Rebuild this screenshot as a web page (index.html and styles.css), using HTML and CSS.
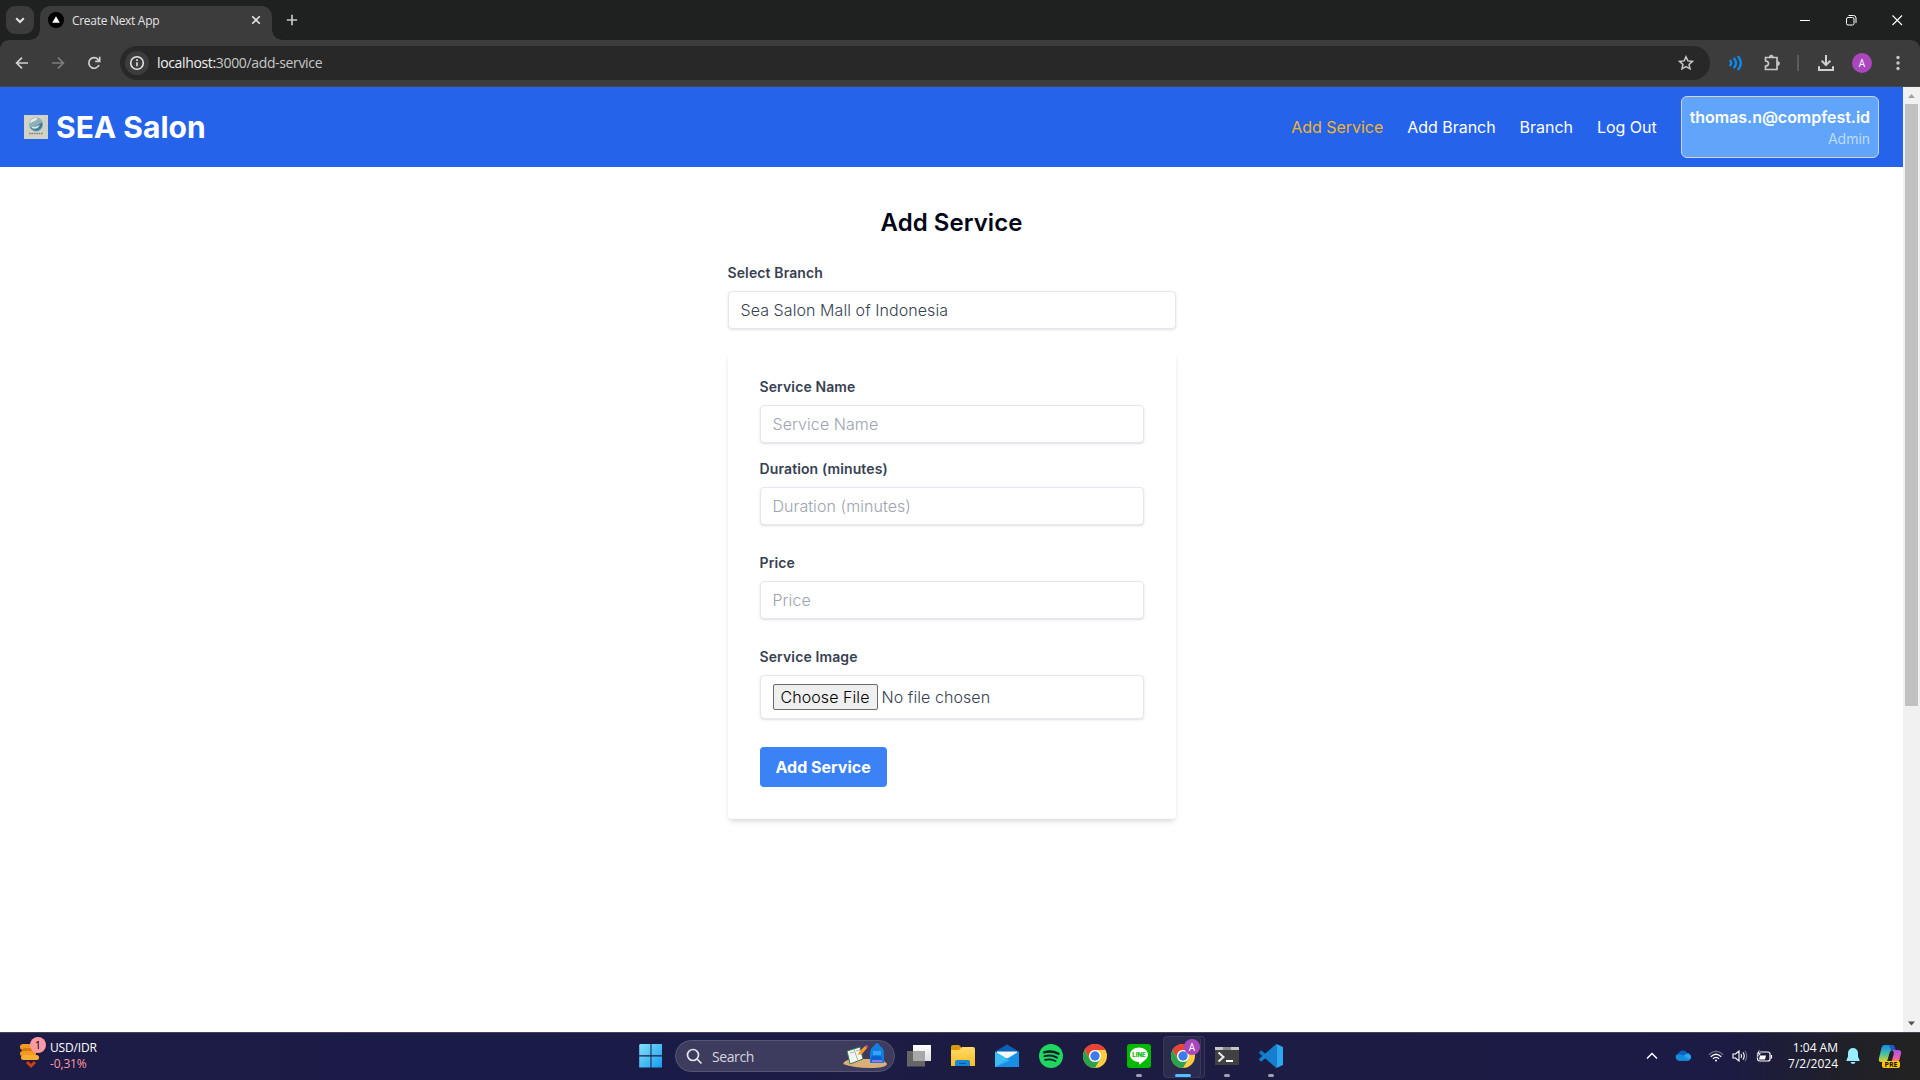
FILE: index.html
```html
<!DOCTYPE html>
<html lang="en">
<head>
<meta charset="utf-8">
<title>Create Next App</title>
<link rel="stylesheet" href="styles.css">
</head>
<body>
<div class="screen">
  <div class="tabstrip">
    <div class="tab-search"><svg width="28" height="28" viewBox="0 0 28 28" fill="none" stroke="#e3e3e3" stroke-width="2"><path d="M10.2 12.2l3.8 3.8 3.8-3.8"/></svg></div>
    <div class="tab">
      <svg class="favicon" width="16" height="16" viewBox="0 0 16 16"><circle cx="8" cy="8" r="8"/><path d="M8 4.2l3.8 6.6H4.2z" fill="#fff"/></svg>
      <span class="tab-title">Create Next App</span>
      <svg class="tab-close" width="10" height="10" viewBox="0 0 10 10" stroke="#e3e3e3" stroke-width="1.6"><path d="M1.2 1.2l7.6 7.6M8.8 1.2L1.2 8.8"/></svg>
    </div>
    <svg class="new-tab" width="12" height="12" viewBox="0 0 12 12" stroke="#c7c7c7" stroke-width="1.7"><path d="M6 .8v10.4M.8 6h10.4"/></svg>
    <div class="window-buttons">
      <svg width="46" height="40" viewBox="0 0 46 40" stroke="#fff"><path d="M18 20.5h10"/></svg>
      <svg width="46" height="40" viewBox="0 0 46 40" fill="none" stroke="#fff"><rect x="18.5" y="17.5" width="7.5" height="7.5" rx="1.5"/><path d="M20.5 15.5h5q2.500 0 2.500 2.500v5"/></svg>
      <svg width="46" height="40" viewBox="0 0 46 40" stroke="#fff" stroke-width="1.1"><path d="M18.500 15.500l9.500 9.500M28 15.500L18.500 25"/></svg>
    </div>
  </div>
  <div class="toolbar">
    <div class="nav-buttons">
      <svg width="16" height="16" viewBox="0 0 16 16" fill="none" stroke="#d0d0d0" stroke-width="1.700"><path d="M14 8H3M8 2.600L2.600 8 8 13.400"/></svg>
      <svg width="16" height="16" viewBox="0 0 16 16" fill="none" stroke="#7c7c7c" stroke-width="1.700"><path d="M2 8h11M8 2.600L13.400 8 8 13.400"/></svg>
      <svg width="16" height="16" viewBox="0 0 16 16" fill="none" stroke="#d0d0d0" stroke-width="1.700"><path d="M13 10a5.300 5.300 0 1 1-1-5.700l1.500 1.500M13.700 1.800v4.500H9.200"/></svg>
    </div>
    <div class="omnibox">
      <div class="site-info"><svg width="16" height="16" viewBox="0 0 16 16" fill="none" stroke="#e3e3e3" stroke-width="1.600"><circle cx="8" cy="8" r="6.300"/><path d="M8 7.200v4M8 4.300v1.700"/></svg></div>
      <span class="url"><b>localhost:</b>3000/add-service</span>
      <svg width="16" height="16" viewBox="0 0 16 16" fill="none" stroke="#c7c7c7" stroke-width="1.500"><path d="M8 1.800l1.900 4.100 4.500.5-3.350 3L12 13.800 8 11.500l-4 2.300.95-4.400-3.350-3 4.500-.5z"/></svg>
    </div>
    <div class="tool-icons">
      <svg class="ti-waves" width="16" height="16" viewBox="0 0 16 16" fill="none" stroke="#0a8df5" stroke-width="2.300" stroke-linecap="round"><path d="M2.300 5.800q2 2.200 0 4.400M6.200 3.600q3.600 4.400 0 8.800M10.400 1.800q5 6.200 0 12.400"/></svg>
      <svg class="ti-ext" width="18" height="18" viewBox="0 0 18 18" fill="none" stroke="#c7c7c7" stroke-width="1.700"><path d="M2.500 3.500h11.500v12H2.500v-3.300q3-.4 3-2.700t-3-2.700z"/><path d="M6.400 2.700a1.900 1.500 0 0 1 3.800 0zM14.800 7.600a1.600 1.900 0 0 1 0 3.800z" fill="#c7c7c7" stroke-width="1"/></svg>
      <i class="divider"></i>
      <svg class="ti-down" width="18" height="18" viewBox="0 0 18 18" fill="none" stroke="#d0d0d0" stroke-width="2"><path d="M9 1v10M4.700 6.800L9 11.100l4.300-4.300M2 12.200V16h14v-3.800"/></svg>
      <span class="avatar">A</span>
      <svg width="4" height="16" viewBox="0 0 4 16" fill="#c7c7c7"><circle cx="2" cy="2.500" r="1.700"/><circle cx="2" cy="8" r="1.700"/><circle cx="2" cy="13.500" r="1.700"/></svg>
    </div>
  </div>

  <div class="viewport">
    <div class="page">
      <header class="site-header">
        <div class="brand">
          <svg width="24" height="24" viewBox="0 0 24 24"><rect width="24" height="24" fill="#d0d2c5"/><circle cx="12" cy="9.500" r="7" fill="#8fb0b8"/><path d="M5.500 8.500a6.700 6.700 0 0 1 8-5.300q-1 2.200-3 2.800T5.500 8.500z" fill="#e9eeeb"/><path d="M5.600 12q3 1.700 5.700-.6t6.900-3.800q1.200 4.700-3 7.500t-9.600-3.100z" fill="#3f8099"/><path d="M7.500 11.500q3 1.500 6-.8l2.500-.8q-2 3.500-5 3.800t-3.500-2.200z" fill="#dbe9ea"/><path d="M5 18.500h14" stroke="#7d8278" stroke-width="1.500" stroke-dasharray="1.600 .8"/></svg>
          <h1>SEA Salon</h1>
        </div>
        <nav class="site-nav">
          <a class="active">Add Service</a>
          <a>Add Branch</a>
          <a>Branch</a>
          <a>Log Out</a>
          <div class="user"><strong>thomas.n@compfest.id</strong><span>Admin</span></div>
        </nav>
      </header>
      <main class="content">
        <h2>Add Service</h2>
        <div class="branch">
          <label>Select Branch</label>
          <div class="field">Sea Salon Mall of Indonesia</div>
        </div>
        <form class="card">
          <div class="group tight">
            <label for="name">Service Name</label>
            <input class="field" id="name" placeholder="Service Name">
          </div>
          <div class="group">
            <label for="duration">Duration (minutes)</label>
            <input class="field" id="duration" placeholder="Duration (minutes)">
          </div>
          <div class="group">
            <label for="price">Price</label>
            <input class="field" id="price" placeholder="Price">
          </div>
          <div class="group">
            <label for="image">Service Image</label>
            <input class="field file" id="image" type="file">
          </div>
          <button class="submit" type="button">Add Service</button>
        </form>
      </main>
    </div>
    <div class="scrollbar">
      <svg width="17" height="17" viewBox="0 0 17 17"><path d="M8.500 7l3.500 4H5z" fill="#a3a3a3"/></svg>
      <div class="thumb"></div>
      <svg class="down" width="17" height="17" viewBox="0 0 17 17"><path d="M8.500 10.500L12 6.500H5z" fill="#505050"/></svg>
    </div>
  </div>

  <div class="taskbar">
    <div class="widget">
      <svg width="30" height="30" viewBox="0 0 30 30"><g fill="#f39a26"><rect x="3" y="3" width="17" height="6" rx="3"/><rect x="5" y="7" width="15" height="5" rx="2.500" fill="#d9780f"/><rect x="3" y="10" width="16" height="5" rx="2.500"/><rect x="4" y="14" width="18" height="5" rx="2.500" fill="#ffac33"/></g><path d="M10 21l4 4 4-4" fill="none" stroke="#cf3f12" stroke-width="3"/></svg>
      <span class="badge">1</span>
      <div class="quote"><span>USD/IDR</span><span class="loss">-0,31%</span></div>
    </div>
    <div class="apps">
      <svg class="start" width="24" height="24" viewBox="0 0 24 24"><defs><linearGradient id="win" x1="0" y1="0" x2="24" y2="24" gradientUnits="userSpaceOnUse"><stop stop-color="#83e1fb"/><stop offset="1" stop-color="#1199ec"/></linearGradient></defs><path d="M1 0h10.500v11.300H.2V1zM12.500 0H23v11.300H12.500zM.2 12.500h11.300V23.500H.2zM12.500 12.500H23v11H12.500z" fill="url(#win)"/></svg>
      <div class="search">
        <svg width="17" height="17" viewBox="0 0 17 17" fill="none" stroke="#e4e4ec" stroke-width="1.700"><circle cx="7" cy="7" r="5.500"/><path d="M11 11l4.500 4.500"/></svg>
        <span>Search</span>
        <svg class="doodle" width="46" height="26" viewBox="0 0 46 26"><path d="M1 21q2-5 12-5h23q9 3 9 5-1 4-17 4T1 21z" fill="#dcae78"/><path d="M5 8l13-4 3 12-13 5z" fill="#f4f6f1" stroke="#34764c"/><path d="M12 6l4 12M8 10l4-1M14 8l4-1" stroke="#a7b3ae"/><path d="M17 9l6-6 2 2-5 6-4 1z" fill="#f69a2c"/><path d="M23 3l2-1 1 2-1 1z" fill="#e95860"/><path d="M32 3q1-3 3-3t3 3q4 2 4 8v9H28v-9q0-6 4-8z" fill="#157edf"/><path d="M31 8h8v4h-8z" fill="#2ea7ff"/><rect x="29" y="13" width="11" height="6" rx="2" fill="#0862d1"/><path d="M30 18h10" stroke="#ce80ed" stroke-width="1.400"/></svg>
      </div>
      <svg width="24" height="24" viewBox="0 0 24 24"><defs><linearGradient id="tv" x2="0" y2="1"><stop stop-color="#fff"/><stop offset="1" stop-color="#dedede"/></linearGradient></defs><rect x="6" y="1" width="18" height="16" fill="url(#tv)"/><rect x="0" y="7" width="18" height="15.500" fill="#666"/><path d="M6 7h12v10H6z" fill="#a8a8a8"/></svg>
      <svg width="24" height="24" viewBox="0 0 24 24"><defs><linearGradient id="fd" x2="0" y2="1"><stop stop-color="#ffda68"/><stop offset="1" stop-color="#f9bc25"/></linearGradient></defs><path d="M0 3q0-2 2-2h6l2 2v4H0z" fill="#d99a0a"/><path d="M0 6h8l3-3h11q2 0 2 2v17H0z" fill="url(#fd)"/><path d="M4 22v-4q0-2 2-2h11q2 0 2 2v4z" fill="#1686d9"/><path d="M8 19.500h7" stroke="#0757a4"/></svg>
      <svg width="24" height="24" viewBox="0 0 24 24"><path d="M0 7.500L12 .5l12 7-12 7z" fill="#0c61b7"/><path d="M2 7.500h20v7H2z" fill="#f3f7fa"/><path d="M0 7.500l12 7.300 12-7.300V23H0z" fill="#2fb3f0"/><path d="M0 23L24 7.500V23z" fill="#188fe2"/><path d="M0 7.500l15 9L0 23z" fill="#45c2f4" opacity=".65"/></svg>
      <svg width="24" height="24" viewBox="0 0 24 24"><circle cx="12" cy="12" r="12" fill="#1ed760"/><g fill="none" stroke="#121e28" stroke-linecap="round"><path d="M5 8.300q8-2.200 14.500 1.500" stroke-width="2.300"/><path d="M5.500 12.200q7-1.800 12.500 1.400" stroke-width="1.900"/><path d="M6 15.900q6-1.500 10.700 1.200" stroke-width="1.600"/></g></svg>
      <svg width="24" height="24" viewBox="0 0 24 24"><g id="chrome"><circle cx="12" cy="12" r="12" fill="#ffcd40"/><path d="M1.600 6A12 12 0 0 1 22.400 6H12a6 6 0 0 0-5.200 9z" fill="#e94335"/><path d="M1.600 6A12 12 0 0 0 12 24l5.200-9a6 6 0 0 1-10.400 0z" fill="#2ba24c"/><circle cx="12" cy="12" r="6" fill="#fff"/><circle cx="12" cy="12" r="4.700" fill="#3b7ded"/></g></svg>
      <div class="app running">
        <svg width="24" height="24" viewBox="0 0 24 24"><rect width="24" height="24" rx="3" fill="#00b900"/><path d="M12 3.500c5 0 9 3.200 9 7.200 0 3.500-4 6.300-8.500 9.800-.6.300-.6-.6-.4-2.600C7 17.900 3 14.700 3 10.700s4-7.200 9-7.200z" fill="#fff"/><text x="12" y="13.200" class="line-word" text-anchor="middle">LINE</text></svg>
      </div>
      <div class="app active-app">
        <svg width="24" height="24" viewBox="0 0 24 24"><use href="#chrome"/></svg>
        <span class="profile">A</span>
      </div>
      <div class="app running">
        <svg width="24" height="24" viewBox="0 0 24 24"><path d="M0 3h24v18H0z" fill="#414141"/><path d="M0 3h24v3H0z" fill="#c8c8c8"/><path d="M8 3h8v3H8z" fill="#8b8b8b"/><path d="M3.500 8.500l5 4.500-5 4.500" fill="none" stroke="#ededed" stroke-width="2"/><path d="M11 17h7" stroke="#fff" stroke-width="2"/></svg>
      </div>
      <div class="app running">
        <svg width="24" height="24" viewBox="0 0 24 24"><path d="M17.500 0L6.700 10 2.300 6.600.4 7.500v2L17.500 24l-.3-6.500z" fill="#0b7bc9"/><path d="M17.500 24L6.700 14l-4.400 3.400-1.900-.9v-2L17.500 0l-.3 6.500z" fill="#167fd0"/><path d="M17.500 0L24 3v18l-6.500 3z" fill="#2ba8f0"/></svg>
      </div>
    </div>
    <div class="tray">
      <svg class="t-up" width="12" height="8" viewBox="0 0 12 8" fill="none" stroke="#fff" stroke-width="1.500"><path d="M1 6.500l5-5 5 5"/></svg>
      <svg class="t-cloud" width="17" height="11" viewBox="0 0 17 11"><path d="M3.500 10.500A3.500 3.500 0 0 1 3 3.700 5.500 5.500 0 0 1 12.500 3 4 4 0 0 1 13 10.500z" fill="#0a64bd"/><path d="M3.500 10.500L9 5.400q3-2.200 5-1.700a3.600 3.600 0 0 1-.5 6.800z" fill="#29a5ed"/><path d="M1 5q5-2 8.500 1.500l5 3.500-1 .5h-10Q0 10 1 5z" fill="#168bdc"/></svg>
      <svg class="t-wifi" width="16" height="12" viewBox="0 0 16 12" fill="none" stroke="#fff" stroke-width="1.300"><path d="M.8 4.800q7.200-7 14.400 0" opacity=".35"/><path d="M2.800 6.700q5.200-5 10.400 0M5 8.800q3-2.800 6 0"/><circle cx="8" cy="10.500" r="1" fill="#fff" stroke="none"/></svg>
      <svg class="t-sound" width="16" height="12" viewBox="0 0 16 12" fill="none" stroke="#fff" stroke-width="1.100"><path d="M1 4h2.500L7 1v10L3.500 8H1z"/><path d="M9 4q1.300 2 0 4M11 2.300q2.500 3.700 0 7.400"/><path d="M13 .8q3.500 5.200 0 10.400" opacity=".35"/></svg>
      <svg class="t-batt" width="17" height="14" viewBox="0 0 17 14" fill="none" stroke="#fff" stroke-width="1.200"><rect x="1.500" y="3" width="12.500" height="9" rx="2"/><path d="M15.500 6v3.500"/><path d="M4 6.500h6l-1 4H3z" fill="#fff" stroke="none"/><path d="M3.700 0L.5 5h2L1.500 8.500 5.500 4H3.400z" fill="#fff" stroke="#1c1c43" stroke-width=".5"/></svg>
      <div class="clock"><span>1:04 AM</span><span>7/2/2024</span></div>
      <svg class="t-bell" width="14" height="16" viewBox="0 0 14 16" fill="#99ebff"><path d="M7 0a5 5 0 0 1 5 5v3.500l1.500 3.500v1H.5v-1L2 8.500V5a5 5 0 0 1 5-5zM4.500 14h5Q9 16 7 16t-2.500-2z"/></svg>
      <svg class="t-copilot" width="24" height="24" viewBox="0 0 24 24"><defs><linearGradient id="c1" x2="0" y2="1"><stop stop-color="#138ae9"/><stop offset=".55" stop-color="#4cc39a"/><stop offset="1" stop-color="#e7cf25"/></linearGradient><linearGradient id="c2" x2="0" y2="1"><stop stop-color="#a854ef"/><stop offset=".6" stop-color="#ef5f9c"/><stop offset="1" stop-color="#f7a052"/></linearGradient></defs><path d="M6 1h8q2 0 2.500 2l1 3h-3q-2 0-3 3l-2 7q-.6 2-2.500 2H3q-3 0-2-4L3.500 4Q4.300 1 6 1z" fill="url(#c1)"/><path d="M14 6h6q4 0 3 4l-2 7q-.8 3-3 3h-7q2 0 2.500-2l2-7q1-3-1.500-5z" fill="url(#c2)"/><path d="M11 1h3q2 0 2.500 2l1 3H13z" fill="#2456c4"/></svg>
      <span class="pre">PRE</span>
    </div>
  </div>
</div>
</body>
</html>
```
FILE: styles.css
```css
* { box-sizing: border-box; }
body { margin: 0; overflow: hidden; font-family: Inter, sans-serif; }
h1, h2 { margin: 0; }
svg { display: block; flex: none; }

.screen { width: 1920px; height: 1080px; display: flex; flex-direction: column; background: #fff; }

/* Browser chrome */
.tabstrip, .toolbar, .taskbar { font-family: "Open Sans", "Noto Sans", sans-serif; }
.tabstrip { position: relative; z-index: 1; height: 40px; flex: none; display: flex; align-items: flex-start; background: #1f2120; }
.tab-search { width: 28px; height: 28px; margin: 6px 6px 0; border-radius: 9px; background: #3c3c3c; }
.tab { position: relative; width: 232px; height: 34px; margin-top: 6px; padding: 0 11px 6px 8px; display: flex; align-items: center; background: #3c3c3c; border-radius: 10px 10px 0 0; }
.tab::before, .tab::after { content: ""; position: absolute; bottom: 0; width: 10px; height: 10px; }
.tab::before { left: -10px; background: radial-gradient(circle at 0 0, transparent 9.5px, #3c3c3c 10px); }
.tab::after { right: -10px; background: radial-gradient(circle at 100% 0, transparent 9.5px, #3c3c3c 10px); }
.tab-title { flex: 1; margin-left: 8px; font-size: 12px; letter-spacing: -.3px; color: #e3e3e3; white-space: nowrap; }
.new-tab { margin: 14px 0 0 14px; }
.window-buttons { margin-left: auto; display: flex; }

.toolbar { height: 47px; flex: none; display: flex; align-items: center; background: #3c3c3c; border-radius: 9px 9px 0 0; box-shadow: 0 -10px 0 #1f2120; padding: 0 20px 1px 14px; border-bottom: 1px solid #484848; }
.nav-buttons { display: flex; gap: 20px; width: 106px; }
.omnibox { width: 1590px; height: 34px; border-radius: 17px; background: #282828; display: flex; align-items: center; padding: 0 16px 0 5px; }
.site-info { width: 24px; height: 24px; border-radius: 50%; background: #3c3c3c; display: grid; place-items: center; }
.url { flex: 1; margin-left: 8px; font-size: 14px; letter-spacing: -.35px; color: #c7c7c7; }
.url b { font-weight: 400; color: #f1f1f1; }
.tool-icons { margin-left: auto; display: flex; align-items: center; }
.ti-ext { margin-left: 19px; }
.divider { width: 2px; height: 16px; background: #5b5b5b; margin: 0 18px 0 16px; }
.avatar { width: 20px; height: 20px; margin: 0 24px 0 17px; border-radius: 50%; background: #ab47bc; color: #fff; font-size: 10px; line-height: 20px; text-align: center; }

/* Web page */
.viewport { flex: 1; display: flex; min-height: 0; }
.page { flex: 1; background: #fff; }
.site-header { height: 80px; padding: 0 24px; display: flex; align-items: center; justify-content: space-between; background: #2563eb; color: #fff; }
.brand { display: flex; align-items: center; gap: 8px; }
.brand h1 { font-size: 30px; line-height: 36px; font-weight: 700; }
.site-nav { display: flex; align-items: center; gap: 24px; font-size: 16px; line-height: 24px; letter-spacing: -.03px; }
.site-nav .active { color: #f0b52a; }
.user { display: flex; flex-direction: column; align-items: flex-end; padding: 8px; border: 1px solid #d1d5db; border-radius: 6px; background: #60a5fa; }
.user strong { font-weight: 600; }
.user span { font-size: 14px; line-height: 20px; color: #bfdbfe; }

.content { width: 448px; margin: 0 auto; padding-top: 40px; }
.content h2 { margin-bottom: 24px; font-size: 24px; line-height: 32px; font-weight: 600; letter-spacing: .05px; text-align: center; color: #020617; }
.content label { display: block; margin-bottom: 8px; font-size: 14px; line-height: 20px; font-weight: 600; letter-spacing: .12px; color: #374151; }
.branch { margin-bottom: 24px; }
.field { display: block; width: 100%; height: 38px; margin: 0; padding: 8px 12px; border: 1px solid #e2e8f0; border-radius: 4px; background: #fff; font: 300 16px/20px Inter, sans-serif; letter-spacing: .07px; color: #374151; box-shadow: 0 1px 3px rgba(0,0,0,.1), 0 1px 2px -1px rgba(0,0,0,.1); }
.field::placeholder { color: #9ca3af; }
.file { height: 44px; line-height: 24px; }
.file::file-selector-button { height: 26px; margin: 0 4px 0 0; padding: 0 7px; border: 1px solid #6b6b6b; border-radius: 2px; background: #efefef; color: #000; font: inherit; letter-spacing: .07px; }
.card { padding: 24px 32px 32px; border-radius: 4px; background: #fff; box-shadow: 0 4px 6px -1px rgba(0,0,0,.1), 0 2px 4px -2px rgba(0,0,0,.1); }
.group { margin-bottom: 28px; }
.tight { margin-bottom: 16px; }
.submit { height: 40px; padding: 8px 16px; border: 0; border-radius: 4px; background: #3b82f6; color: #fff; font: 700 16px/24px Inter, sans-serif; display: block; }

.scrollbar { width: 17px; background: #f1f1f1; display: flex; flex-direction: column; align-items: center; }
.thumb { width: 13px; height: 602px; background: #c1c1c1; }
.scrollbar .down { margin-top: auto; }

/* Windows taskbar */
.taskbar { position: relative; height: 48px; flex: none; display: flex; align-items: center; box-shadow: inset 0 1px #454456; background: linear-gradient(90deg, #1d1c46 0, #1b1b48 620px, #1c1c42 1000px, #1b1b46 1720px, #202028 1850px, #222 1920px); color: #fff; }
.widget { position: relative; width: 639px; padding-left: 17px; display: flex; align-items: center; }
.badge { position: absolute; left: 30px; top: -3px; width: 16px; height: 16px; border-radius: 50%; background: #ff99a4; color: #000; font-size: 11px; line-height: 16px; text-align: center; }
.quote { display: flex; flex-direction: column; margin-left: 3px; font-size: 12px; line-height: 16px; letter-spacing: -.15px; }
.loss { color: #ff99a4; }
.apps { display: flex; align-items: center; gap: 20px; height: 100%; }
.start { margin-right: -8px; }
.search { width: 220px; height: 32px; margin-right: -8px; padding: 0 6px 0 10px; display: flex; align-items: center; border: 1px solid #56556f; border-radius: 16px; background: #3d3c5e; }
.search span { flex: 1; margin-left: 9px; font-size: 14px; letter-spacing: -.4px; color: #d5d5de; }
.app { position: relative; width: 24px; height: 100%; display: grid; place-items: center; }
.running::after, .active-app::after { content: ""; position: absolute; bottom: 3px; left: 9px; width: 6px; height: 3px; border-radius: 2px; background: #a09fae; }
.active-app::after { left: 4px; width: 16px; background: #4cc2ff; }
.active-app::before { content: ""; position: absolute; left: -8px; top: 4px; width: 36px; height: 40px; border: 1px solid #393957; border-radius: 4px; background: #2b2b50; box-shadow: 4px 0 0 -1px #222248, 4px 0 #393957; }
.active-app svg { position: relative; }
.profile { position: absolute; left: 13px; top: 7px; width: 16px; height: 16px; border-radius: 50%; background: #ab47bc; font-size: 10px; line-height: 16px; text-align: center; }
.line-word { font: 800 6px Inter, sans-serif; fill: #00b900; }
.tray { position: absolute; right: 0; top: 0; height: 47px; width: 274px; display: flex; align-items: center; }
.t-cloud { margin-left: 17px; }
.t-wifi { margin-left: 16px; }
.t-sound { margin-left: 8px; }
.t-batt { margin-left: 8px; }
.clock { width: 65px; display: flex; flex-direction: column; align-items: flex-end; font-size: 12px; line-height: 16px; white-space: nowrap; }
.t-bell { margin-left: 8px; }
.t-copilot { margin-left: 18px; }
.pre { position: absolute; left: 236px; top: 29px; width: 18px; height: 7px; border-radius: 2px; background: #ffc700; color: #111; font-size: 7px; font-weight: 700; line-height: 7px; text-align: center; }
```
